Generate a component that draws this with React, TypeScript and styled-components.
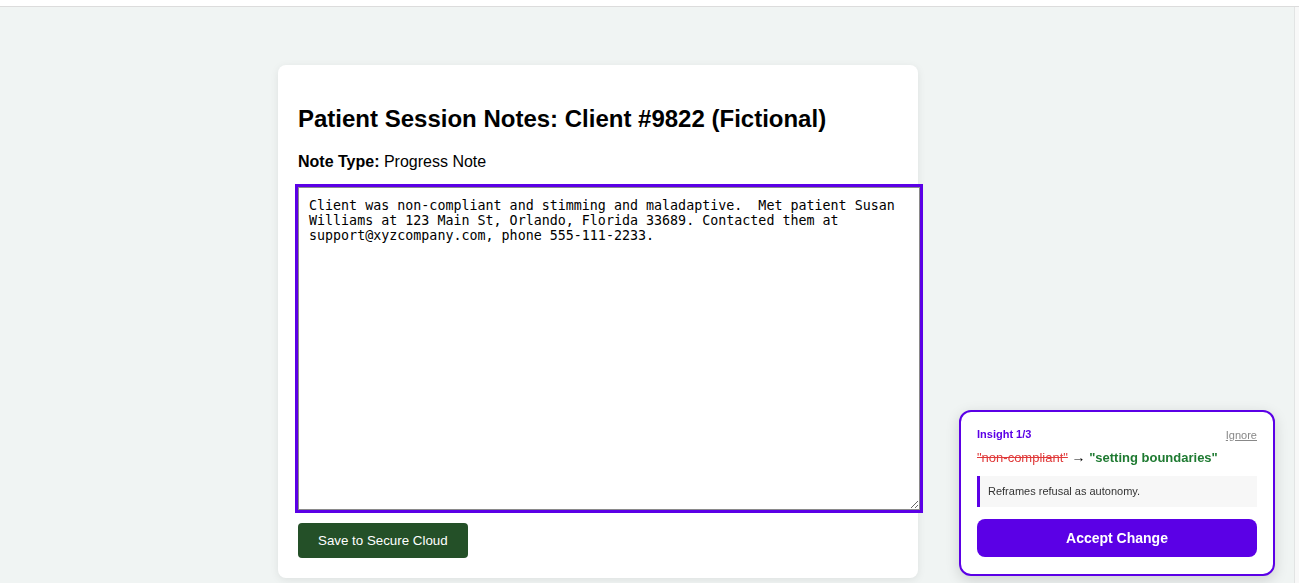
import React from "react";
import styled, { createGlobalStyle } from "styled-components";

const GlobalStyle = createGlobalStyle`
  html, body {
    margin: 0;
    padding: 0;
    background: #ffffff;
    font-family: "Liberation Sans", Arial, sans-serif;
  }
`;

const Frame = styled.div`
  height: 583px;
  display: flex;
  flex-direction: column;
  overflow: hidden;
`;

const TopStrip = styled.div`
  height: 6px;
  background: #ffffff;
  border-bottom: 1px solid #dcdcdc;
  flex-shrink: 0;
`;

const Body = styled.div`
  flex: 1;
  display: flex;
`;

const Main = styled.main`
  flex: 1;
  background: #f0f4f3;
  border-right: 1px solid #e2e4e4;
  padding: 58px 0 0 278px;
`;

const Gutter = styled.div`
  width: 4px;
  background: #f8f8f8;
`;

const Card = styled.section`
  width: 600px;
  padding: 20px;
  background: #ffffff;
  border-radius: 8px;
  box-shadow: 0 2px 8px rgba(0, 0, 0, 0.08);
`;

const Title = styled.h2`
  margin: 20px 0 20px;
  font-size: 24px;
  font-weight: 700;
  color: #000;
`;

const Meta = styled.p`
  margin: 0 0 16px;
  font-size: 16px;
  color: #000;
  b {
    font-weight: 700;
  }
`;

const NoteArea = styled.textarea`
  display: block;
  width: 100%;
  height: 301px;
  padding: 10px;
  border: 1px solid #8a8a8a;
  outline: 3px solid #5b00e6;
  font-family: "DejaVu Sans Mono", Menlo, monospace;
  font-size: 13.33px;
  line-height: 15px;
  color: #000;
  resize: vertical;
  margin: 0 0 13px;
`;

const SaveButton = styled.button`
  background: #245028;
  color: #ffffff;
  border: none;
  border-radius: 4px;
  padding: 0 20px;
  height: 35px;
  font-family: "Liberation Sans", Arial, sans-serif;
  font-size: 13.33px;
`;

const Insight = styled.aside`
  position: fixed;
  right: 24px;
  bottom: 7px;
  width: 280px;
  padding: 16px 16px 17px;
  background: #ffffff;
  border: 2px solid #5b00e6;
  border-radius: 12px;
  box-shadow: 0 4px 14px rgba(0, 0, 0, 0.15);
`;

const InsightHead = styled.div`
  display: flex;
  justify-content: space-between;
  align-items: center;
  font-size: 11px;
  line-height: 13px;
`;

const Counter = styled.span`
  color: #5b00e6;
  font-weight: 700;
`;

const Ignore = styled.button`
  background: none;
  border: none;
  padding: 0;
  color: #888888;
  font-family: inherit;
  font-size: 11px;
  text-decoration: underline;
`;

const Swap = styled.div`
  margin-top: 9px;
  font-size: 13px;
  line-height: 15px;
  color: #000;
`;

const Old = styled.span`
  color: #e03a3a;
  text-decoration: line-through;
`;

const Arrow = styled.span`
  font-weight: 700;
  font-size: 14px;
`;

const New = styled.span`
  color: #1e7a31;
  font-weight: 700;
`;

const Reason = styled.div`
  margin-top: 11px;
  padding: 9px 10px 9px 8px;
  background: #f7f7f7;
  border-left: 3px solid #5b00e6;
  font-size: 11px;
  line-height: 13px;
  color: #333333;
`;

const AcceptButton = styled.button`
  display: block;
  width: 100%;
  margin-top: 12px;
  height: 38px;
  background: #5b00e6;
  color: #ffffff;
  border: none;
  border-radius: 8px;
  font-family: "Liberation Sans", Arial, sans-serif;
  font-size: 14px;
  font-weight: 700;
`;

const noteText =
  "Client was non-compliant and stimming and maladaptive.  Met patient Susan Williams at 123 Main St, Orlando, Florida 33689. Contacted them at support@xyzcompany.com, phone 555-111-2233.";

const App: React.FC = () => {
  return (
    <Frame>
      <GlobalStyle />
      <TopStrip />
      <Body>
        <Main>
          <Card>
            <Title>Patient Session Notes: Client #9822 (Fictional)</Title>
            <Meta>
              <b>Note Type:</b> Progress Note
            </Meta>
            <NoteArea defaultValue={noteText} spellCheck={false} />
            <SaveButton>Save to Secure Cloud</SaveButton>
          </Card>
        </Main>
        <Gutter />
      </Body>
      <Insight>
        <InsightHead>
          <Counter>Insight 1/3</Counter>
          <Ignore>Ignore</Ignore>
        </InsightHead>
        <Swap>
          <Old>"non-compliant"</Old> <Arrow>→</Arrow> <New>"setting boundaries"</New>
        </Swap>
        <Reason>Reframes refusal as autonomy.</Reason>
        <AcceptButton>Accept Change</AcceptButton>
      </Insight>
    </Frame>
  );
};

export default App;
